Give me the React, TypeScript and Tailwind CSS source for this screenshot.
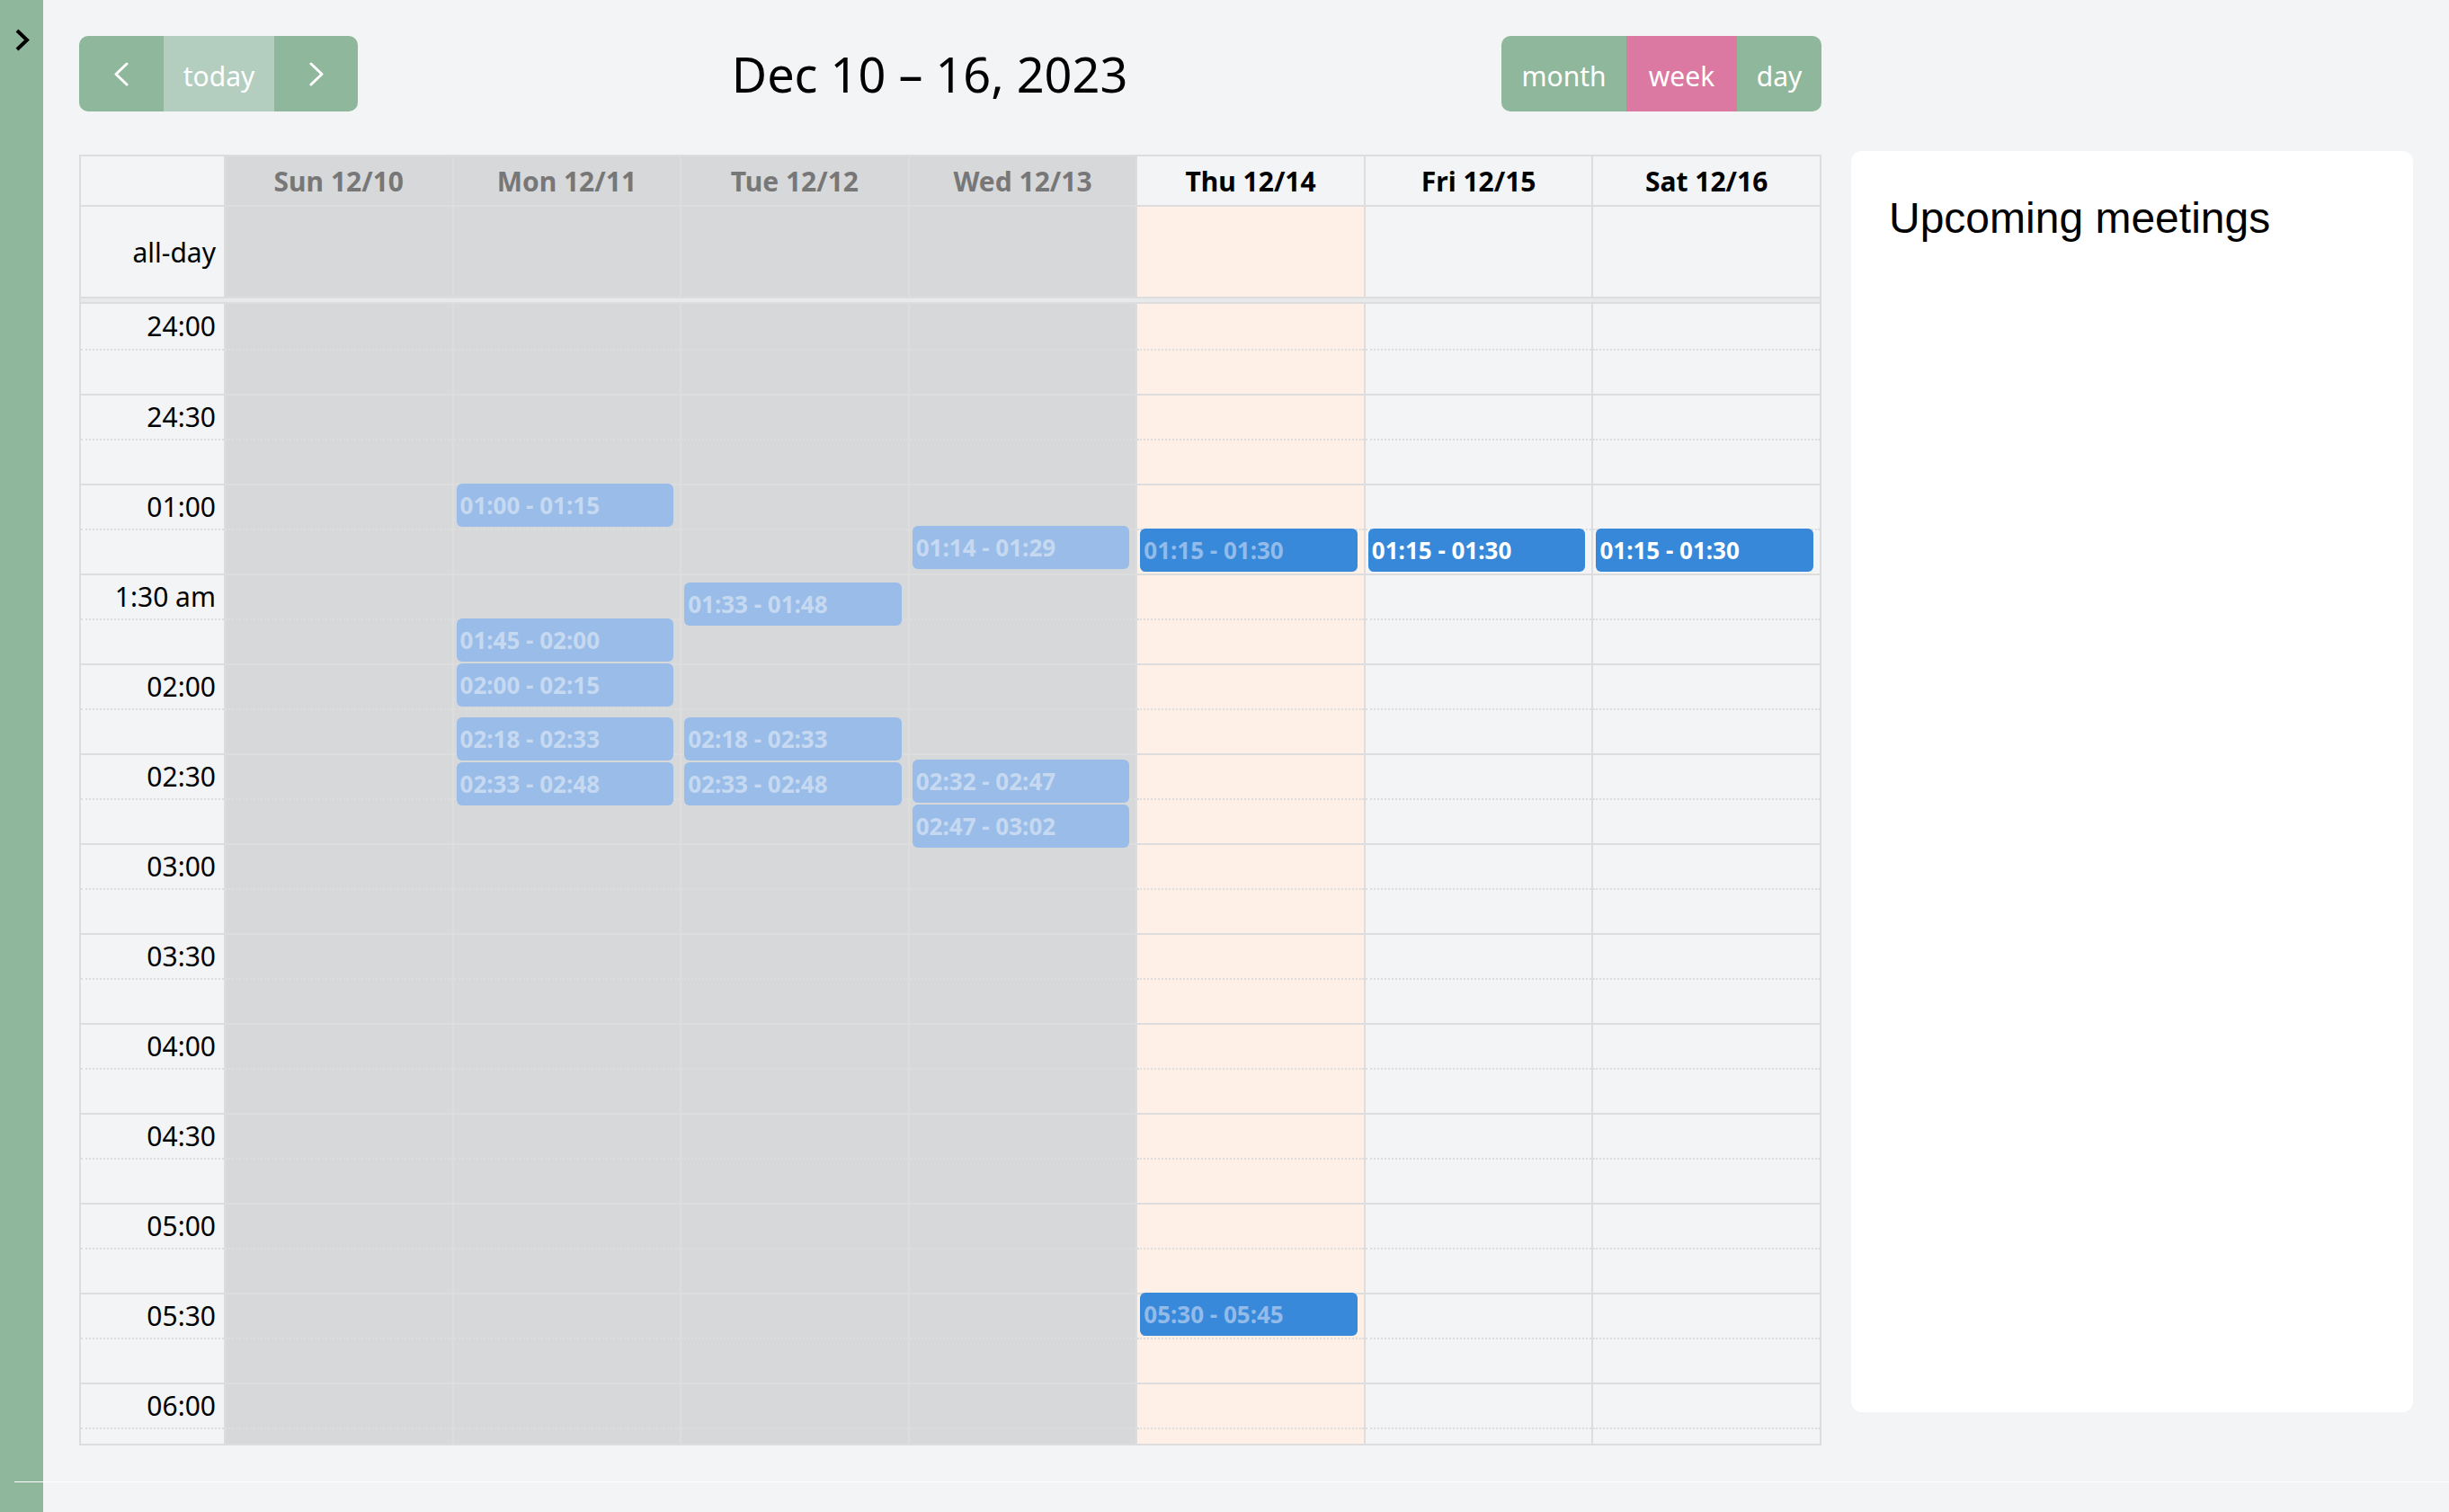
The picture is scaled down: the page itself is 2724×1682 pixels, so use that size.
import React from "react";

type Kind = "past" | "today" | "future";

const days: { label: string; kind: Kind }[] = [
  { label: "Sun 12/10", kind: "past" },
  { label: "Mon 12/11", kind: "past" },
  { label: "Tue 12/12", kind: "past" },
  { label: "Wed 12/13", kind: "past" },
  { label: "Thu 12/14", kind: "today" },
  { label: "Fri 12/15", kind: "future" },
  { label: "Sat 12/16", kind: "future" },
];

type Ev = { day: number; start: string; end: string };

const events: Ev[] = [
  { day: 1, start: "01:00", end: "01:15" },
  { day: 1, start: "01:45", end: "02:00" },
  { day: 1, start: "02:00", end: "02:15" },
  { day: 1, start: "02:18", end: "02:33" },
  { day: 1, start: "02:33", end: "02:48" },
  { day: 2, start: "01:33", end: "01:48" },
  { day: 2, start: "02:18", end: "02:33" },
  { day: 2, start: "02:33", end: "02:48" },
  { day: 3, start: "01:14", end: "01:29" },
  { day: 3, start: "02:32", end: "02:47" },
  { day: 3, start: "02:47", end: "03:02" },
  { day: 4, start: "01:15", end: "01:30" },
  { day: 4, start: "05:30", end: "05:45" },
  { day: 5, start: "01:15", end: "01:30" },
  { day: 6, start: "01:15", end: "01:30" },
];

const labels = [
  "24:00",
  "24:30",
  "01:00",
  "1:30 am",
  "02:00",
  "02:30",
  "03:00",
  "03:30",
  "04:00",
  "04:30",
  "05:00",
  "05:30",
  "06:00",
  "06:30",
];

const ROWS = 26;
const font = { fontFamily: '"Noto Sans", sans-serif' };

const toMin = (s: string) => {
  const [h, m] = s.split(":").map(Number);
  return h * 60 + m;
};

function colBg(kind: Kind) {
  if (kind === "past") return "bg-[#d7d8da]";
  if (kind === "today") return "bg-[#fef0e6]";
  return "bg-[#f3f4f6]";
}

function Chevron({ dir, className }: { dir: "left" | "right"; className?: string }) {
  return (
    <svg width="18" height="27" viewBox="0 0 18 27" className={className} fill="none">
      <polyline
        points={dir === "left" ? "15,2 3,13.5 15,25" : "3,2 15,13.5 3,25"}
        stroke="white"
        strokeWidth="3"
        strokeLinecap="round"
        strokeLinejoin="round"
      />
    </svg>
  );
}

function SlotRows({ axis }: { axis?: boolean }) {
  return (
    <>
      {Array.from({ length: ROWS }).map((_, i) => {
        const border =
          i === 0
            ? ""
            : i % 2 === 0
            ? "border-t-2 border-solid border-[#dddddd]"
            : "border-t-2 border-dotted border-[#dddddd]";
        return (
          <div key={i} className={`h-[50px] box-border ${border} flex items-center justify-end pr-[9px]`}>
            {axis && i % 2 === 0 ? (
              <span className="text-[30px] leading-none text-black whitespace-nowrap">{labels[i / 2]}</span>
            ) : null}
          </div>
        );
      })}
    </>
  );
}

function EventBox({ ev }: { ev: Ev }) {
  const kind = days[ev.day].kind;
  const s = toMin(ev.start);
  const e = toMin(ev.end);
  const top = (s * 10) / 3;
  const height = ((e - s) * 10) / 3 - 2;
  const cls =
    kind === "past"
      ? "bg-[#99bde8] text-[#c6d9f1]"
      : kind === "today"
      ? "bg-[#3889d9] text-[#93bbea]"
      : "bg-[#3788d8] text-white";
  return (
    <div
      className={`absolute left-[3px] right-[7px] rounded-[6px] ${cls} flex items-center pl-[4px] overflow-hidden`}
      style={{ top, height }}
    >
      <span className="text-[26px] font-bold leading-none whitespace-nowrap">
        {ev.start} - {ev.end}
      </span>
    </div>
  );
}

export default function App() {
  return (
    <div className="h-[1682px] w-full flex flex-col bg-[#f3f4f6] overflow-hidden" style={font}>
      <div className="h-[1648px] flex">
        <aside className="w-[48px] shrink-0 bg-[#8fb79b] pt-[32px] pl-[17px]">
          <svg width="16" height="25" viewBox="0 0 16 25" fill="none">
            <polyline points="2,2 13,12.5 2,23" stroke="black" strokeWidth="4" strokeLinejoin="miter" />
          </svg>
        </aside>
        <main className="flex-1 flex gap-[33px] px-[40px] pt-[40px]">
          <section className="w-[1938px] shrink-0 flex flex-col">
            {/* Toolbar */}
            <div className="h-[84px] flex items-center justify-between">
              <div className="flex h-[84px] rounded-[10px] overflow-hidden">
                <button className="w-[94px] bg-[#8fb79b] flex items-center justify-center">
                  <Chevron dir="left" />
                </button>
                <button className="w-[123px] bg-[#b3cdbf] text-white text-[30px] pt-[4px]">today</button>
                <button className="w-[93px] bg-[#8fb79b] flex items-center justify-center">
                  <Chevron dir="right" />
                </button>
              </div>
              <h2 className="text-[54px] font-normal text-black leading-none whitespace-nowrap">
                Dec 10 – 16, 2023
              </h2>
              <div className="flex h-[84px] rounded-[10px] overflow-hidden text-white text-[30px]">
                <button className="w-[139px] bg-[#8fb79b] pt-[4px]">month</button>
                <button className="w-[123px] bg-[#db79a3] pt-[4px]">week</button>
                <button className="w-[94px] bg-[#8fb79b] pt-[4px]">day</button>
              </div>
            </div>

            {/* Calendar grid */}
            <div className="mt-[48px] h-[1436px] border-2 border-[#dddddd] flex flex-col box-border">
              {/* header */}
              <div className="h-[56px] box-border border-b-2 border-[#dddddd] grid grid-cols-[159px_repeat(7,1fr)]">
                <div className="bg-[#f3f4f6]" />
                {days.map((d) => (
                  <div
                    key={d.label}
                    className={`border-l-2 border-[#dddddd] flex items-center justify-center text-[30px] font-bold ${
                      d.kind === "past" ? "bg-[#d7d8da] text-[#777777]" : "bg-[#f3f4f6] text-black"
                    }`}
                  >
                    {d.label}
                  </div>
                ))}
              </div>
              {/* all-day */}
              <div className="h-[100px] grid grid-cols-[159px_repeat(7,1fr)]">
                <div className="bg-[#f3f4f6] flex items-center justify-end pr-[9px] text-[30px] text-black">
                  all-day
                </div>
                {days.map((d) => (
                  <div key={d.label} className={`border-l-2 border-[#dddddd] ${colBg(d.kind)}`} />
                ))}
              </div>
              {/* divider */}
              <div className="h-[8px] box-border border-t-2 border-b-2 border-[#dddddd] bg-[#e8e9eb]" />
              {/* body */}
              <div className="flex-1 overflow-hidden grid grid-cols-[159px_repeat(7,1fr)] items-start">
                <div className="bg-[#f3f4f6]">
                  <SlotRows axis />
                </div>
                {days.map((d, di) => (
                  <div key={d.label} className={`relative border-l-2 border-[#dddddd] ${colBg(d.kind)}`}>
                    <SlotRows />
                    {events
                      .filter((ev) => ev.day === di)
                      .map((ev, k) => (
                        <EventBox key={k} ev={ev} />
                      ))}
                  </div>
                ))}
              </div>
            </div>
          </section>

          {/* Side panel */}
          <aside className="flex-1 mt-[128px] h-[1403px] bg-white rounded-[12px] pt-[47px] px-[42px]">
            <h3
              className="text-[48px] leading-[1.15] text-black font-normal"
              style={{ fontFamily: '"Liberation Sans", Arial, sans-serif' }}
            >
              Upcoming meetings
            </h3>
          </aside>
        </main>
      </div>
      {/* footer */}
      <div className="flex-1 flex">
        <div className="w-[16px] bg-[#8fb79b]" />
        <div className="w-[32px] bg-[#8fb79b] border-t border-white" />
        <div className="flex-1 border-t border-white" />
      </div>
    </div>
  );
}
